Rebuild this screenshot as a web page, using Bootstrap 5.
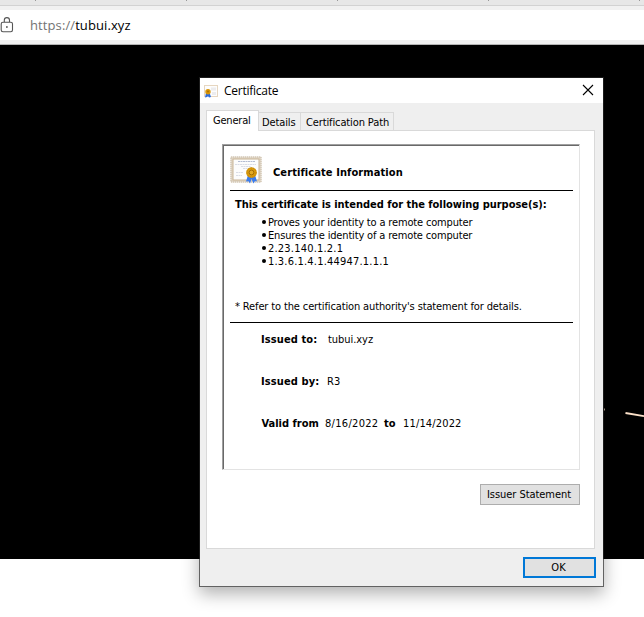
<!DOCTYPE html>
<html lang="en">
<head>
<meta charset="utf-8">
<title>Certificate</title>
<link href="https://cdn.jsdelivr.net/npm/bootstrap@5.3.0/dist/css/bootstrap.min.css" rel="stylesheet">
<style>
body{height:617px;background:#fff;color:#000;font:11px/13px "DejaVu Sans Condensed","DejaVu Sans",sans-serif}
svg{display:block;flex:none}
/* browser chrome */
.tabstrip{height:6px;background:#e7e7e7;border-bottom:1px solid #d2d2d2}
.toolbar{height:39px;padding:4px 0;background:#f1f1f1;border-bottom:1px solid #b4b4b4}
.address{height:30px;background:#fff;font:13px/20px "Open Sans",sans-serif;letter-spacing:.1px}
.address svg{margin-right:16px}
.scheme{color:#737373}
.viewport{height:514px;background:#000}
/* dialog window */
.dialog{left:199px;top:77px;width:405px;height:510px;background:#efefef;background-clip:padding-box;border:1px solid #626262;border-top-color:#1c1c1c;box-shadow:0 7px 16px 0 rgba(0,0,0,.3)}
.side{left:-1px;width:1px;top:-1px;height:482px;background:#1c1c1c}
.side-right{left:403px}
.titlebar{height:25px;background:#fff;padding:0 9px 0 3px;font:12px/17px "Open Sans",sans-serif;letter-spacing:-.25px}
.tabs{height:27px;padding:7px 0 0 6px}
.tabx{border:1px solid #d9d9d9;border-left:0;border-bottom:0;height:18px;padding:3px 0 0 3px;letter-spacing:-.12px}
.tabx.current{height:21px;background:#fff;border-left:1px solid #d9d9d9;padding:3px 0 0 6px;width:53px;margin-bottom:-1px;letter-spacing:-.2px}
.pane{width:389px;height:419px;margin-left:6px;border:1px solid #d9d9d9;background:#fff;padding:13px 14px 0 15px}
.sunken{height:326px;border:1px solid;border-color:#a0a0a0 #e3e3e3 #e3e3e3 #a0a0a0;box-shadow:inset 1px 1px #696969;padding:1px 6px 0 7px}
.heading{height:45px;border-bottom:1px solid #000}
.purposes{height:132px;padding:7px 0 0 5px;border-bottom:1px solid #000}
.bullets{margin:5px 0 32px 25px;letter-spacing:-.16px}
.bullets li{height:13px;display:flex}
.bullets li::before{content:"";width:4px;height:4px;border-radius:50%;background:#000;margin:4px 2.500px 0 1.500px;flex:none}
.oid{letter-spacing:.2px}
.field{height:42px;padding-left:31px}
.btnx{background:#e1e1e1;border:1px solid #adadad;border-radius:0;padding:0;font:inherit;color:#000}
.issuer{width:100px;height:21px;margin-top:14px;padding-right:2px;letter-spacing:-.05px}
.ok{width:73px;height:21px;border:2px solid #0078d7;margin:8px 7px 0 0;padding-right:2px}
</style>
</head>
<body class="overflow-hidden position-relative">
<header>
  <div class="tabstrip"><svg width="644" height="1"><path d="M35 0h1M186 0h1M337 0h1M488 0h1M639 0h1" transform="translate(0 .5)" stroke="#999"/></svg></div>
  <div class="toolbar">
    <div class="address d-flex align-items-center">
      <svg width="14" height="18" viewBox="0 0 14 18" fill="none" stroke="#555" stroke-width="1.1"><rect x="1.2" y="6.3" width="11.3" height="9.5" rx="1.7"/><path d="M4.3 6V4.2a2.6 2.6 0 0 1 5.2 0V6"/><circle cx="6.9" cy="11" r=".9" fill="#555" stroke="none"/></svg>
      <span><span class="scheme">https://</span>tubui.xyz</span>
    </div>
  </div>
</header>
<main class="viewport">
  <svg width="644" height="514"><path d="M625.5 368 644 371.2" stroke="#fbe0c8" stroke-width="1.8"/><path d="M604 364.5h1" stroke="#b5a393" stroke-width="2"/></svg>
</main>

<section class="dialog position-absolute">
  <i class="side position-absolute"></i><i class="side side-right position-absolute"></i>
  <div class="titlebar d-flex align-items-center">
    <svg width="16" height="16" viewBox="0 0 16 16"><rect x="1.500" y="2.500" width="13" height="11" fill="#fdfdfd" stroke="#e6d6c0"/><path d="M8 4.500h5v3H8zM9 9h4v3H9z" fill="#ececee"/><path d="M3 10 2 14.500l2-.5 1-1 1 1.500 2-.5-1.500-4.500z" fill="#2b6ce0"/><circle cx="5" cy="8.800" r="2.700" fill="#d9960a"/><circle cx="5" cy="8.500" r="1.100" fill="#b47700"/></svg>
    <span class="me-auto" style="margin-left:5px;padding-bottom:1px">Certificate</span>
    <svg width="12" height="12" viewBox="0 0 12 12" style="margin-bottom:1px"><path d="m1 1 10 10m0-10L1 11" stroke="#000" stroke-width="1.100"/></svg>
  </div>
  <nav class="tabs d-flex align-items-end">
    <div class="tabx current position-relative">General</div>
    <div class="tabx" style="width:42px">Details</div>
    <div class="tabx" style="width:93px;padding-left:5px">Certification Path</div>
  </nav>
  <div class="pane">
    <div class="sunken">
      <div class="heading d-flex">
        <svg class="mt-2" width="32" height="32" viewBox="0 0 32 32">
          <rect x=".5" y="2.500" width="31" height="26" rx="1" fill="#e2d9cb"/>
          <rect x="1" y="3" width="30" height="25" fill="none" stroke="#cbbda8" stroke-dasharray="1 1"/>
          <rect x="3" y="5" width="26" height="21" fill="#fcfcfc" stroke="#c8b394"/>
          <path d="M8 7.500h17" stroke="#b4bdd2" stroke-dasharray="2 .5"/>
          <path d="M5 10.500h21M11 12.500h10M13 14.500h6M6 18.500h7M6 21.500h6" stroke="#dadde6" stroke-dasharray="2 .5"/>
          <path d="m18 21-2 6.500 2.500-.3 1.500 2.300 1.500-4.500 2 4.500 1.500-2.400 2 .3L25 21z" fill="#3b7cec"/>
          <circle cx="21.500" cy="18.500" r="5.300" fill="#d99a0b"/><circle cx="21.500" cy="18.500" r="4.600" fill="none" stroke="#c68508" stroke-dasharray="1.500 1"/>
          <circle cx="21.500" cy="18.500" r="2.400" fill="#e3aa25" stroke="#9c6704" stroke-width=".9"/>
        </svg>
        <b style="margin:20px 0 0 11px;letter-spacing:.09px">Certificate Information</b>
      </div>
      <div class="purposes">
        <b class="d-block text-nowrap" style="letter-spacing:-.035px">This certificate is intended for the following purpose(s):</b>
        <ul class="bullets list-unstyled">
          <li>Proves your identity to a remote computer</li>
          <li>Ensures the identity of a remote computer</li>
          <li class="oid">2.23.140.1.2.1</li>
          <li class="oid">1.3.6.1.4.1.44947.1.1.1</li>
        </ul>
        <div class="text-nowrap" style="letter-spacing:-.13px">*<span style="margin-left:3px">Refer to the certification authority's statement for details.</span></div>
      </div>
      <div style="height:10px"></div>
      <div class="field d-flex"><b style="width:67px;letter-spacing:.1px">Issued to:</b><span style="letter-spacing:-.05px">tubui.xyz</span></div>
      <div class="field d-flex"><b style="width:66px;letter-spacing:.1px">Issued by:</b><span>R3</span></div>
      <div class="field d-flex"><b style="width:64px;padding-left:.5px">Valid from</b><span style="width:59px;letter-spacing:.3px">8/16/2022</span><b style="width:19px">to</b><span style="letter-spacing:.15px">11/14/2022</span></div>
    </div>
    <div class="d-flex justify-content-end"><button class="btn btnx issuer">Issuer Statement</button></div>
  </div>
  <div class="d-flex justify-content-end"><button class="btn btnx ok">OK</button></div>
</section>
<script src="https://cdn.jsdelivr.net/npm/bootstrap@5.3.0/dist/js/bootstrap.bundle.min.js"></script>
</body>
</html>
